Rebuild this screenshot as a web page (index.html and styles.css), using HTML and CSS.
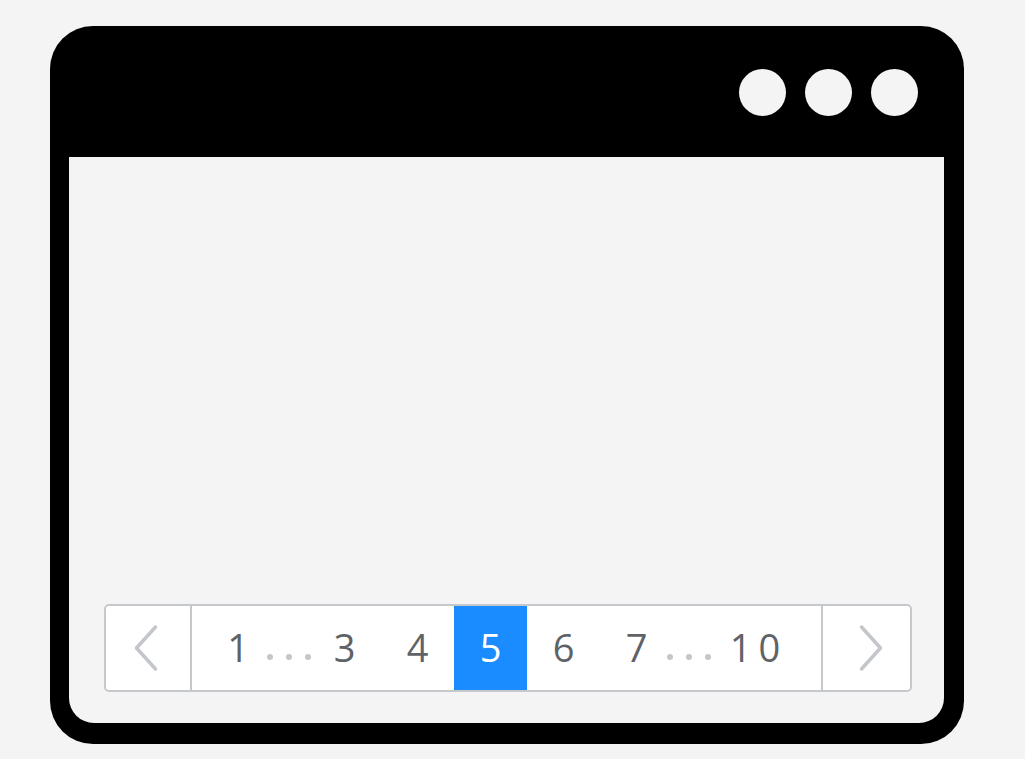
FILE: index.html
```html
<!DOCTYPE html>
<html lang="en">
<head>
<meta charset="utf-8">
<title>Pagination window</title>
<link rel="stylesheet" href="styles.css">
</head>
<body>
<div class="window">
  <div class="titlebar">
    <span class="dot-btn"></span>
    <span class="dot-btn"></span>
    <span class="dot-btn"></span>
  </div>
  <div class="content">
    <nav class="pager">
      <div class="nav-btn prev">
        <svg width="28" height="50" viewBox="0 0 28 50"><polyline points="23.5,4 4.5,25 23.5,46" fill="none" stroke="#c3c6ca" stroke-width="3.5" stroke-linecap="round" stroke-linejoin="round"/></svg>
      </div>
      <div class="pages">
        <span class="page first">1</span>
        <span class="ellipsis e1"><i></i><i></i><i></i></span>
        <span class="page">3</span>
        <span class="page">4</span>
        <span class="page active">5</span>
        <span class="page">6</span>
        <span class="page">7</span>
        <span class="ellipsis e2"><i></i><i></i><i></i></span>
        <span class="page last">10</span>
      </div>
      <div class="nav-btn next">
        <svg width="28" height="50" viewBox="0 0 28 50"><polyline points="4.5,4 23.5,25 4.5,46" fill="none" stroke="#c3c6ca" stroke-width="3.5" stroke-linecap="round" stroke-linejoin="round"/></svg>
      </div>
    </nav>
  </div>
</div>
</body>
</html>
```
FILE: styles.css
```css
html, body {
  margin: 0;
  padding: 0;
  background: #f4f4f4;
}
body {
  width: 1025px;
  height: 759px;
  font-family: "Open Sans", "Liberation Sans", sans-serif;
}
.window {
  position: relative;
  margin: 26px 0 0 50px;
  width: 914px;
  height: 718px;
  box-sizing: border-box;
  background: #000;
  border-radius: 43px;
  padding: 0 20px 21px 19px;
  display: flex;
  flex-direction: column;
}
.titlebar {
  height: 131px;
  flex: 0 0 131px;
  display: flex;
  justify-content: flex-end;
  align-items: center;
  gap: 19px;
  padding-right: 26px;
  padding-top: 1px;
  box-sizing: border-box;
}
.dot-btn {
  width: 47px;
  height: 47px;
  border-radius: 50%;
  background: #f4f4f4;
}
.content {
  flex: 1;
  background: #f4f4f4;
  border-radius: 0 0 25px 25px;
  display: flex;
  flex-direction: column;
  justify-content: flex-end;
  padding: 0 32px 31px 35px;
}
.pager {
  height: 88px;
  box-sizing: border-box;
  border: 2px solid #c5c8cc;
  border-radius: 5px;
  background: #fff;
  display: flex;
}
.nav-btn {
  display: flex;
  align-items: center;
  justify-content: center;
  box-sizing: border-box;
}
.prev {
  width: 86px;
  border-right: 2px solid #c5c8cc;
  padding-right: 4px;
}
.next {
  width: 89px;
  border-left: 2px solid #c5c8cc;
  padding-left: 9px;
}
.pages {
  flex: 1;
  display: flex;
  align-items: stretch;
}
.page {
  width: 73px;
  flex: 0 0 auto;
  display: flex;
  align-items: center;
  justify-content: center;
  font-size: 38px;
  color: #5f6367;
  box-sizing: border-box;
  padding-bottom: 2px;
}
.page.first {
  width: 77px;
  padding-left: 15px;
}
.page.last {
  width: 102px;
  letter-spacing: 7px;
  padding-left: 7px;
}
.page.active {
  background: #1a8cff;
  color: #fff;
}
.ellipsis {
  display: flex;
  align-items: center;
  justify-content: center;
  gap: 13px;
  padding-top: 18px;
  box-sizing: border-box;
}
.ellipsis.e1 { width: 39px; }
.ellipsis.e2 { width: 31px; }
.ellipsis i {
  flex: 0 0 6px;
  width: 6px;
  height: 6px;
  border-radius: 50%;
  background: #c4c6c8;
}
```
